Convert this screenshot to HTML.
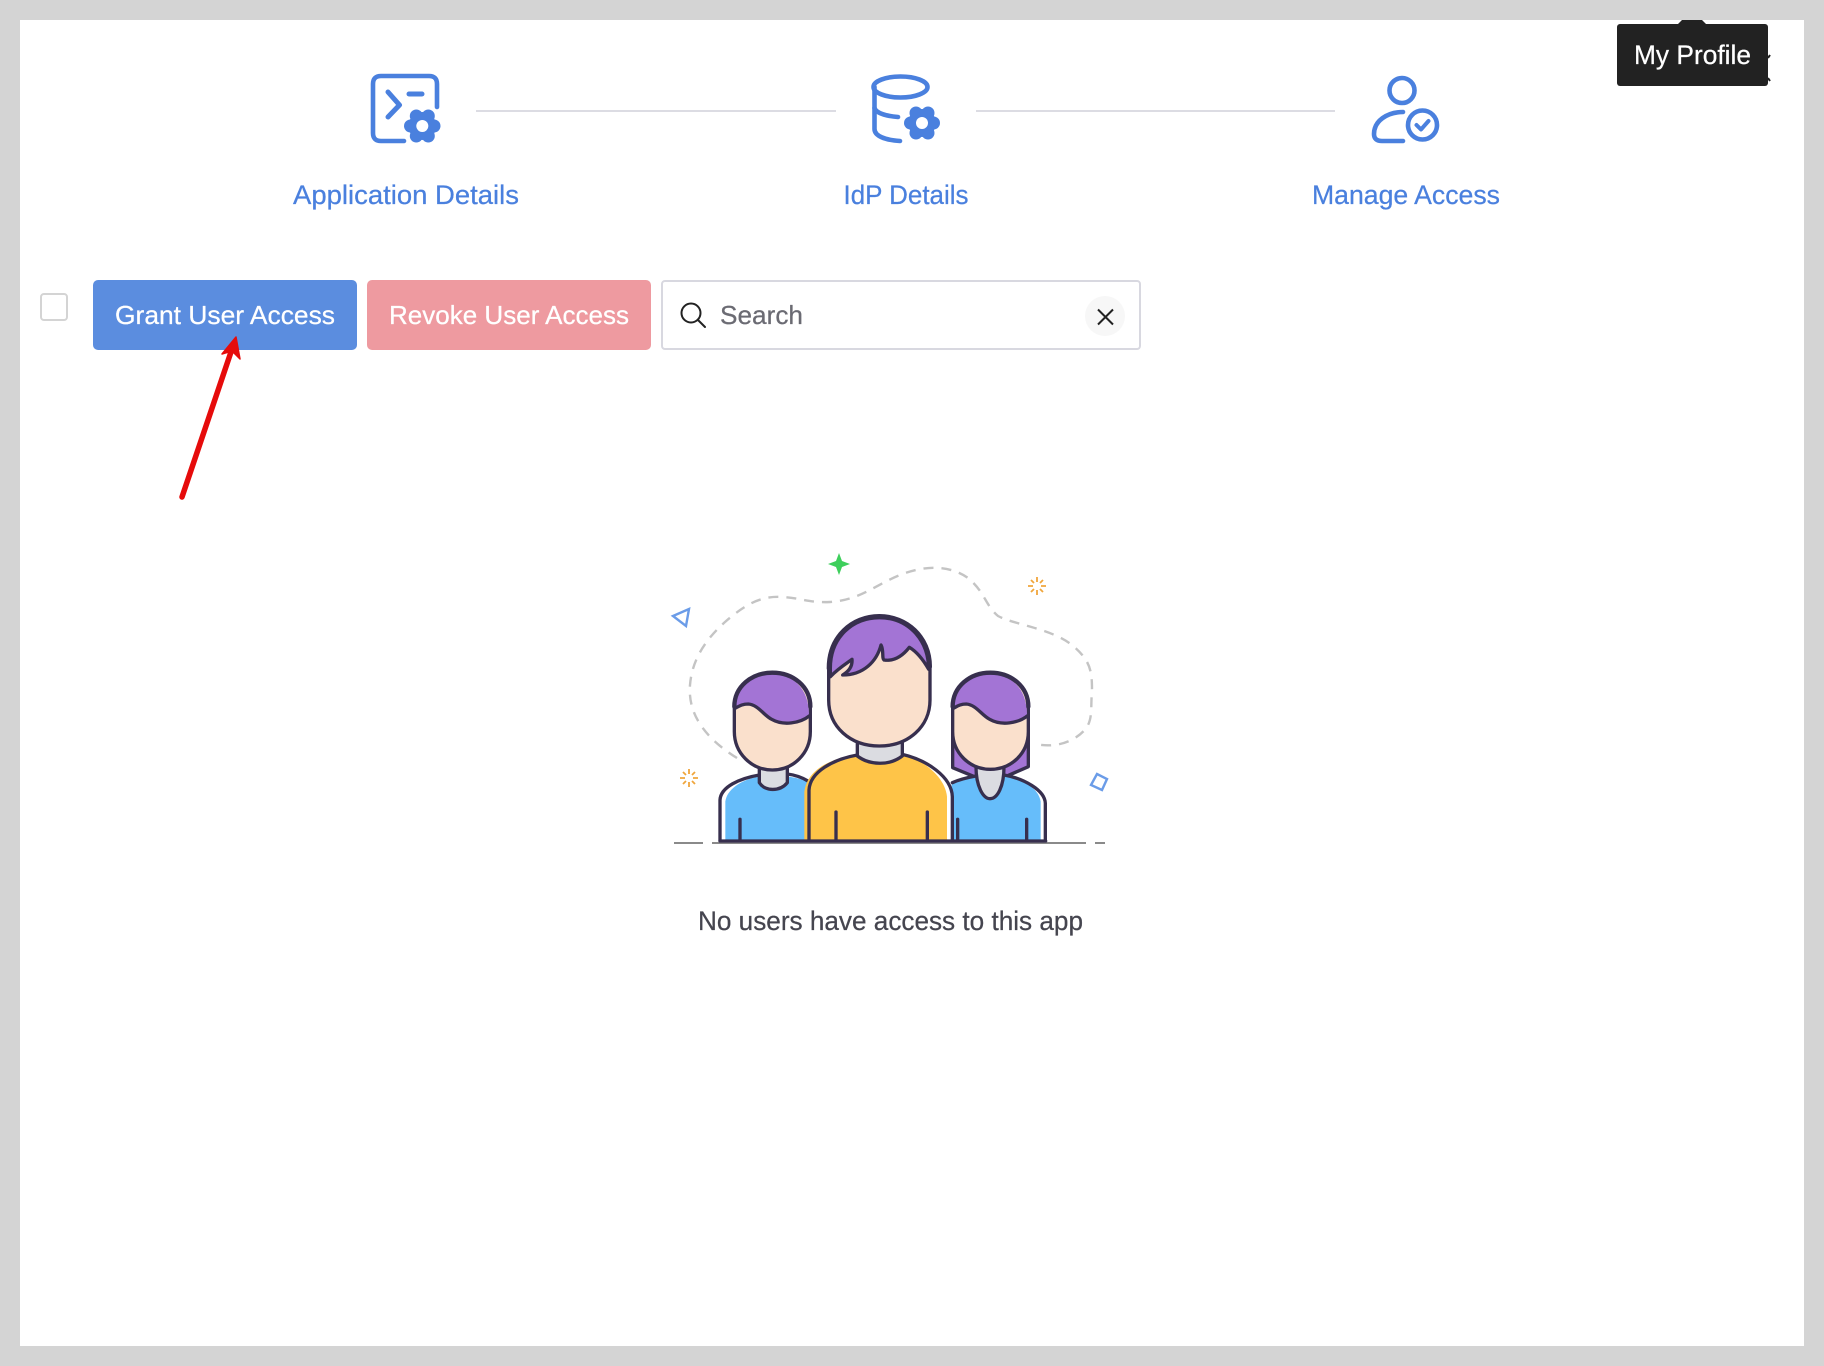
<!DOCTYPE html>
<html lang="en">
<head>
<meta charset="utf-8">
<title>Manage Access</title>
<style>
html,body{margin:0;padding:0;width:1824px;height:1366px;overflow:hidden;background:#d4d4d4}
svg{display:block;position:absolute;left:0;top:0}
text{font-family:"Liberation Sans",sans-serif;stroke-width:.25px}
</style>
</head>
<body>
<svg width="1824" height="1366" viewBox="0 0 1824 1366" xmlns="http://www.w3.org/2000/svg">
<rect x="0" y="0" width="1824" height="1366" fill="#d4d4d4"/>
<rect x="20" y="20" width="1784" height="1326" fill="#fff"/>

<!-- step connectors -->
<rect x="476" y="110" width="360" height="2" fill="#dcdce3"/>
<rect x="976" y="110" width="359" height="2" fill="#dcdce3"/>

<!-- icon 1 -->
<g fill="none" stroke="#4a80de" stroke-width="4.600" stroke-linecap="round" stroke-linejoin="round">
  <path d="M404,141 H381 Q373,141 373,133 V84 Q373,76 381,76 H429 Q437,76 437,84 V107"/>
  <path d="M388,92 L399.500,105 L388,117" stroke-width="5"/>
  <path d="M409,94 H422" stroke-width="5"/>
</g>
<g fill="#4a80de">
  <circle cx="422.300" cy="126" r="14"/>
  <circle cx="434" cy="126" r="6.500"/><circle cx="410.500" cy="126" r="6.500"/>
  <circle cx="428.300" cy="116" r="6.500"/><circle cx="416.300" cy="116" r="6.500"/>
  <circle cx="428.300" cy="136" r="6.500"/><circle cx="416.300" cy="136" r="6.500"/>
</g>
<circle cx="422.300" cy="126" r="6" fill="#fff"/>

<!-- icon 2 -->
<g fill="none" stroke="#4a80de" stroke-width="4.600" stroke-linecap="round" stroke-linejoin="round">
  <ellipse cx="900.500" cy="87" rx="27" ry="10.500"/>
  <path d="M874.500,87 V129 C874.500,136 885,140 900,141"/>
  <path d="M874.500,108 C876,113 886,116 898,117"/>
</g>
<g fill="#4a80de">
  <circle cx="922" cy="123" r="14"/>
  <circle cx="933.500" cy="123" r="6.500"/><circle cx="910.500" cy="123" r="6.500"/>
  <circle cx="928" cy="113" r="6.500"/><circle cx="916" cy="113" r="6.500"/>
  <circle cx="928" cy="133" r="6.500"/><circle cx="916" cy="133" r="6.500"/>
</g>
<circle cx="922" cy="123" r="6" fill="#fff"/>

<!-- icon 3 -->
<g fill="none" stroke="#4a80de" stroke-width="4.600" stroke-linecap="round" stroke-linejoin="round">
  <circle cx="1402" cy="90.500" r="12.500"/>
  <path d="M1403,112 C1387,112 1374,121 1374,134 Q1374,141 1382,141 H1403"/>
  <circle cx="1422.500" cy="125" r="14.500"/>
  <path d="M1416.500,125 L1421,129.500 L1428.500,121" stroke-width="4"/>
</g>

<!-- step labels -->
<g fill="#4a80de" stroke="#4a80de" font-size="27">
  <text x="293" y="204" textLength="226" lengthAdjust="spacingAndGlyphs">Application Details</text>
  <text x="843.500" y="204" textLength="125" lengthAdjust="spacingAndGlyphs">IdP Details</text>
  <text x="1312" y="204" textLength="188" lengthAdjust="spacingAndGlyphs">Manage Access</text>
</g>

<!-- tooltip -->
<path d="M1768,58 L1770,55 M1768,78 L1770,81" stroke="#222" stroke-width="2" fill="none"/>
<path d="M1678,24 L1682,20 H1702 L1706,24 Z" fill="#222"/>
<rect x="1617" y="24" width="151" height="62" rx="3" fill="#222"/>
<text x="1634" y="64" font-size="27" fill="#fff" stroke="#fff" textLength="117" lengthAdjust="spacingAndGlyphs">My Profile</text>

<!-- toolbar -->
<rect x="41" y="294" width="26" height="26" rx="3" fill="#fff" stroke="#d4d4d4" stroke-width="2"/>
<rect x="93" y="280" width="264" height="70" rx="5" fill="#5b8ddf"/>
<text x="115" y="324" font-size="26" fill="#fff" stroke="#fff" textLength="220" lengthAdjust="spacingAndGlyphs">Grant User Access</text>
<rect x="367" y="280" width="284" height="70" rx="5" fill="#ee9aa0"/>
<text x="389" y="324" font-size="26" fill="#fff" stroke="#fff" textLength="240" lengthAdjust="spacingAndGlyphs">Revoke User Access</text>
<rect x="662" y="281" width="478" height="68" rx="3" fill="#fff" stroke="#d8d8e0" stroke-width="2"/>
<circle cx="691" cy="313" r="9.500" fill="none" stroke="#222" stroke-width="2"/>
<path d="M698,320 L705,327" stroke="#222" stroke-width="2" stroke-linecap="round"/>
<text x="720" y="324" font-size="26" fill="#6b6b73" stroke="#6b6b73" textLength="83" lengthAdjust="spacingAndGlyphs">Search</text>
<circle cx="1105" cy="316" r="20" fill="#f7f7f7"/>
<path d="M1098,309.500 L1113,324.500 M1113,309.500 L1098,324.500" stroke="#222" stroke-width="2" fill="none"/>

<!-- red arrow -->
<path d="M182,497 L233,346" stroke="#e60b0b" stroke-width="5.500" stroke-linecap="round" fill="none"/>
<path d="M236,337 L240,359 L232,351 L222,354 Z" fill="#e60b0b" stroke="#e60b0b" stroke-width="1.500" stroke-linejoin="round"/>

<!-- illustration: dashed blob -->
<path d="M737,758 C700,735 688,710 690,685 C692,660 705,640 725,622 C750,600 765,596 783,597 C800,598 810,603 830,602 C860,600 875,585 900,575 C925,565 950,565 968,578 C985,592 985,605 998,616 C1015,625 1050,628 1072,645 C1090,660 1092,670 1092,690 C1090,715 1095,725 1075,738 C1060,747 1045,746 1035,744" fill="none" stroke="#c4c4c4" stroke-width="2.400" stroke-dasharray="10 8"/>

<!-- decorations -->
<path d="M839,553 L842,561 L850,564 L842,567 L839,575 L836,567 L828,564 L836,561 Z" fill="#3ecf5c"/>
<path d="M673,616 L689,609 L686,626 Z" fill="none" stroke="#6b9ce8" stroke-width="2.400"/>
<path d="M1097,774 L1107,779 L1102,790 L1091,785 Z" fill="none" stroke="#6b9ce8" stroke-width="2.400"/>
<g stroke="#f0a63c" stroke-width="1.800" fill="none">
  <path d="M689,769 V774 M689,782 V787 M680,778 H685 M693,778 H698 M683,772 L686,775 M692,781 L695,784 M695,772 L692,775 M686,781 L683,784"/>
  <path d="M1037,577 V582 M1037,590 V595 M1028,586 H1033 M1041,586 H1046 M1031,580 L1034,583 M1040,589 L1043,592 M1043,580 L1040,583 M1034,589 L1031,592"/>
</g>

<!-- ground -->
<path d="M674,843 H703 M712,843 H1086 M1095,843 H1105" stroke="#8a8a8a" stroke-width="2" fill="none"/>

<!-- people (coordinates at 3x) -->
<g transform="translate(700,600) scale(0.33333)" stroke-linejoin="round" stroke-linecap="round">
  <!-- left person -->
  <path d="M76,722 V605 C80,570 120,540 178,530 H262 C285,532 305,538 330,548 V722 Z" fill="#66bdfa"/>
  <path d="M60,722 V600 C62,560 120,535 178,525 M262,522 C285,525 305,532 322,542" fill="none" stroke="#372f4e" stroke-width="10"/>
  <path d="M120,658 V722" stroke="#372f4e" stroke-width="10" fill="none"/>
  <path d="M178,500 V548 C195,575 240,575 262,548 V500 Z" fill="#dbdce1" stroke="#372f4e" stroke-width="10"/>
  <path d="M103,320 V395 C103,460 155,510 217,510 C280,510 331,460 331,395 V320 C331,260 280,218 217,218 C155,218 103,260 103,320 Z" fill="#fae0cc" stroke="#372f4e" stroke-width="10"/>
  <path d="M108,322 C108,262 160,223 217,223 C280,223 327,265 327,345 C300,370 250,378 215,358 C190,345 175,315 145,312 C125,312 115,320 108,322 Z" fill="#a374d5"/>
  <path d="M105,325 C115,320 125,312 145,312 C175,315 190,345 215,358 C250,378 300,370 329,347" fill="none" stroke="#372f4e" stroke-width="10"/>
  <path d="M103,320 C103,260 155,218 217,218 C280,218 331,260 331,320" fill="none" stroke="#372f4e" stroke-width="13"/>

  <!-- right person -->
  <path d="M758,325 V503 L828,532 H912 L985,500 V325 Z" fill="#a374d5" stroke="#372f4e" stroke-width="10"/>
  <path d="M755,552 C775,540 800,535 828,530 H912 C960,535 1015,560 1022,605 V722 H757 Z" fill="#66bdfa"/>
  <path d="M757,548 C775,540 800,533 828,528 M912,525 C970,535 1035,570 1036,610 V722" fill="none" stroke="#372f4e" stroke-width="10"/>
  <path d="M773,658 V722 M980,658 V722" stroke="#372f4e" stroke-width="10" fill="none"/>
  <path d="M828,500 C828,560 850,596 870,596 C892,596 912,560 912,500 Z" fill="#dbdce1" stroke="#372f4e" stroke-width="10"/>
  <path d="M758,320 V395 C758,460 810,508 871,508 C934,508 985,460 985,395 V320 C985,260 934,218 871,218 C810,218 758,260 758,320 Z" fill="#fae0cc" stroke="#372f4e" stroke-width="10"/>
  <path d="M763,322 C763,262 815,223 871,223 C934,223 981,265 981,345 C954,370 904,378 869,358 C844,345 829,315 799,312 C779,312 770,320 763,322 Z" fill="#a374d5"/>
  <path d="M760,325 C770,320 779,312 799,312 C829,315 844,345 869,358 C904,378 954,370 983,347" fill="none" stroke="#372f4e" stroke-width="10"/>
  <path d="M758,320 C758,260 810,218 871,218 C934,218 985,260 985,320" fill="none" stroke="#372f4e" stroke-width="13"/>

  <!-- centre person -->
  <path d="M327,722 V570 C330,515 400,478 472,463 H607 C680,480 755,530 757,590 V722 Z" fill="#fff"/>
  <path d="M313,722 V575 C320,520 370,480 472,462 H607 C670,480 735,530 741,590 V722 Z" fill="#fec448"/>
  <path d="M327,722 V570 C330,515 400,478 472,465 M607,463 C680,480 755,530 757,590 V722" fill="none" stroke="#372f4e" stroke-width="10"/>
  <path d="M408,636 V722 M682,636 V722" stroke="#372f4e" stroke-width="10" fill="none"/>
  <path d="M472,420 V468 C510,497 570,497 607,468 V420 Z" fill="#dbdce1" stroke="#372f4e" stroke-width="10"/>
  <path d="M386,205 V300 C386,380 450,438 538,438 C625,438 690,380 690,300 V200 C690,110 620,48 538,48 C455,48 386,110 386,205 Z" fill="#fae0cc" stroke="#372f4e" stroke-width="10"/>
  <path d="M391,230 V205 C391,112 458,53 538,53 C618,53 685,112 686,208 C670,180 650,155 628,142 C610,165 585,185 552,180 C545,175 552,150 543,135 C530,185 490,225 428,225 C445,215 458,200 456,178 C440,190 415,205 391,230 Z" fill="#a374d5" stroke="#372f4e" stroke-width="10"/>
  <path d="M386,205 C386,110 455,48 538,48 C620,48 690,110 690,200" fill="none" stroke="#372f4e" stroke-width="12"/>

  <!-- base -->
  <path d="M60,723 H1037" stroke="#372f4e" stroke-width="10" fill="none"/>
</g>

<text x="698" y="930" font-size="27" fill="#45454f" stroke="#45454f" textLength="385" lengthAdjust="spacingAndGlyphs">No users have access to this app</text>
</svg>
</body>
</html>
